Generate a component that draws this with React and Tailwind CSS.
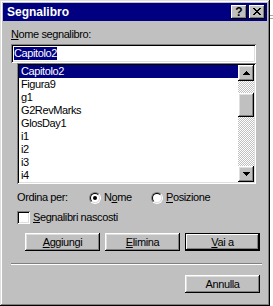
import React from 'react'

// Win95-style bevels
const raised = 'shadow-[inset_-1px_-1px_0_#000,inset_1px_1px_0_#fff,inset_-2px_-2px_0_#808080,inset_2px_2px_0_#dfdfdf]'
const sunken = 'shadow-[inset_1px_1px_0_#808080,inset_-1px_-1px_0_#fff,inset_2px_2px_0_#000,inset_-2px_-2px_0_#dfdfdf]'

const bookmarks = ['Capitolo2', 'Figura9', 'g1', 'G2RevMarks', 'GlosDay1', 'i1', 'i2', 'i3', 'i4']

const Arrow = ({ down }) => (
  <svg width="7" height="4" viewBox="0 0 7 4" shapeRendering="crispEdges" className={down ? 'rotate-180' : ''}>
    <rect x="3" y="0" width="1" height="1" fill="#000" />
    <rect x="2" y="1" width="3" height="1" fill="#000" />
    <rect x="1" y="2" width="5" height="1" fill="#000" />
    <rect x="0" y="3" width="7" height="1" fill="#000" />
  </svg>
)

const CloseGlyph = () => (
  <svg width="8" height="7" viewBox="0 0 8 7" shapeRendering="crispEdges">
    <path d="M0 0h2v1H0zM6 0h2v1H6zM1 1h2v1H1zM5 1h2v1H5zM2 2h4v1H2zM3 3h2v1H3zM2 4h4v1H2zM1 5h2v1H1zM5 5h2v1H5zM0 6h2v1H0zM6 6h2v1H6z" fill="#000" />
  </svg>
)

const Radio = ({ checked }) => (
  <div className="w-[12px] h-[12px] rounded-full border border-t-[#808080] border-l-[#808080] border-b-white border-r-white">
    <div className="w-full h-full rounded-full border border-t-black border-l-black border-b-[#dfdfdf] border-r-[#dfdfdf] bg-white flex items-center justify-center">
      {checked && <div className="w-[4px] h-[4px] rounded-full bg-black" />}
    </div>
  </div>
)

const Button = ({ children, isDefault }) => (
  <div
    className={`w-[75px] h-[18px] bg-[#c0c0c0] flex items-center justify-center ${
      isDefault
        ? 'shadow-[inset_0_0_0_1px_#000,inset_-2px_-2px_0_#000,inset_2px_2px_0_#fff,inset_-3px_-3px_0_#808080]'
        : raised
    }`}
  >
    {children}
  </div>
)

export default function App() {
  return (
    <div className="w-[273px] h-[306px] bg-white flex font-['Liberation_Sans',Arial,sans-serif] text-[11px] leading-[13px] tracking-[-0.4px] text-black">
      <div className={`w-[270px] h-[306px] bg-[#c0c0c0] p-[3px] flex flex-col shadow-[inset_-1px_-1px_0_#000,inset_1px_1px_0_#dfdfdf,inset_-2px_-2px_0_#808080,inset_2px_2px_0_#fff]`}>
        {/* title bar */}
        <div className="h-[18px] bg-[#000080] flex items-center pl-[4px] pr-[2px]">
          <span className="flex-1 text-white font-bold text-[12px] tracking-normal">Segnalibro</span>
          <div className="w-[16px] h-[14px] mr-[2px] bg-[#c0c0c0] shadow-[inset_-1px_-1px_0_#000,inset_1px_1px_0_#fff,inset_-2px_-2px_0_#808080] flex items-center justify-center font-bold text-[12px] leading-none tracking-normal pb-[1px]">
            ?
          </div>
          <div className="w-[16px] h-[14px] bg-[#c0c0c0] shadow-[inset_-1px_-1px_0_#000,inset_1px_1px_0_#fff,inset_-2px_-2px_0_#808080] flex items-center justify-center pb-[1px]">
            <CloseGlyph />
          </div>
        </div>

        <div className="flex flex-col pl-[8px] pt-[7px]">
          <div className="h-[13px]">
            <u>N</u>ome segnalibro:
          </div>

          <div className={`mt-[3px] w-[245px] h-[19px] bg-white p-[3px] ${sunken}`}>
            <span className="block w-fit h-[13px] bg-[#000080] text-white">Capitolo2</span>
          </div>

          <div className={`ml-[6px] w-[239px] h-[121px] bg-white p-[2px] flex ${sunken}`}>
            <div className="flex-1 flex flex-col">
              {bookmarks.map((b, i) => (
                <div key={b} className={`h-[13px] pl-[2px] ${i === 0 ? 'bg-[#000080] text-white' : ''}`}>
                  {b}
                </div>
              ))}
            </div>
            <div className="w-[16px] flex flex-col bg-[image:conic-gradient(#fff_25%,#c0c0c0_0_50%,#fff_0_75%,#c0c0c0_0)] bg-size-[2px_2px]">
              <div className={`h-[16px] bg-[#c0c0c0] flex items-center justify-center ${raised}`}>
                <Arrow />
              </div>
              <div className="flex-1 flex flex-col">
                <div className={`mt-[12px] h-[24px] bg-[#c0c0c0] ${raised}`} />
              </div>
              <div className={`h-[16px] bg-[#c0c0c0] flex items-center justify-center ${raised}`}>
                <Arrow down />
              </div>
            </div>
          </div>

          <div className="mt-[7px] ml-[6px] h-[13px] flex items-center">
            <div className="w-[72px]">Ordina per:</div>
            <div className="w-[62px] flex items-center">
              <Radio checked />
              <span className="ml-[3px]">
                N<u>o</u>me
              </span>
            </div>
            <div className="flex items-center">
              <Radio />
              <span className="ml-[3px]">
                <u>P</u>osizione
              </span>
            </div>
          </div>

          <div className="mt-[7px] ml-[6px] h-[13px] flex items-center">
            <div className={`w-[13px] h-[13px] bg-white ${sunken}`} />
            <span className="ml-[3px]">
              <u>S</u>egnalibri nascosti
            </span>
          </div>

          <div className="mt-[9px] pr-[7px] flex justify-end gap-[5px]">
            <Button>
              <span>
                <u>A</u>ggiungi
              </span>
            </Button>
            <Button>
              <span>
                <u>E</u>limina
              </span>
            </Button>
            <Button isDefault>
              <span>
                <u>V</u>ai a
              </span>
            </Button>
          </div>

          <div className="mt-[12px] mr-[5px] h-[2px] border-t border-t-[#808080] border-b border-b-white" />

          <div className="mt-[10px] pr-[7px] flex justify-end">
            <Button>Annulla</Button>
          </div>
        </div>
      </div>

      <div className="w-[3px] pt-[15px] flex flex-col gap-[2px]">
        <div className="h-[1px] bg-[#a8a8a8]" />
        <div className="h-[1px] bg-[#a8a8a8]" />
      </div>
    </div>
  )
}
